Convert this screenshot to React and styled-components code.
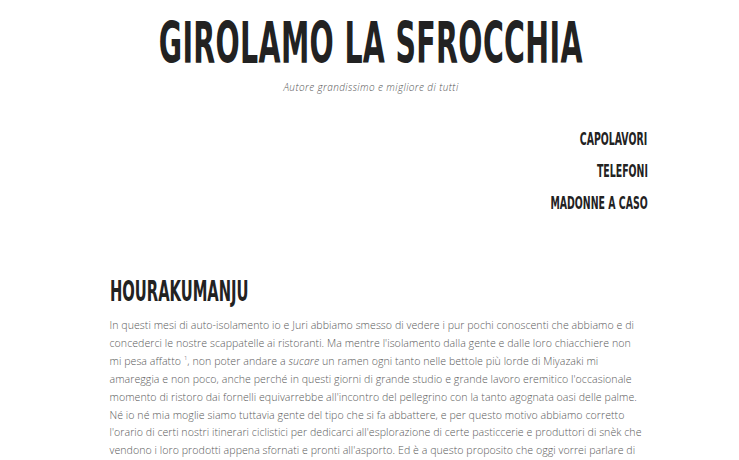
import styled, { createGlobalStyle } from "styled-components";

const GlobalStyle = createGlobalStyle`
  html, body {
    margin: 0;
    padding: 0;
    background: #ffffff;
  }
  body {
    font-family: "Open Sans", "Liberation Sans", sans-serif;
  }
`;

// no Bebas here: a condensed sans, squeezed sideways
const display = `"DejaVu Sans Condensed", "DejaVu Sans", "Liberation Sans", sans-serif`;

const Page = styled.div`
  width: 739px;
  height: 460px;
  overflow: hidden;
`;

const Header = styled.header`
  display: flex;
  flex-direction: column;
  align-items: center;
  padding-top: 14px;
  padding-left: 3px;
`;

const Title = styled.h1`
  margin: 0;
  font-family: ${display};
  font-weight: 700;
  font-size: 55px;
  line-height: 60px;
  color: #222222;
  letter-spacing: 0.6px;
  transform: scale(0.575, 1.02);
  white-space: nowrap;
`;

const Tagline = styled.p`
  margin: 6px 0 0;
  font-style: italic;
  font-weight: 300;
  font-size: 10px;
  color: #555555;
  letter-spacing: 0.4px;
`;

const Container = styled.div`
  max-width: 560px;
  margin: 0 auto;
  padding: 0 0 0 20px;
  box-sizing: border-box;
`;

const Nav = styled.nav`
  display: flex;
  flex-direction: column;
  align-items: flex-end;
  gap: 13px;
  margin-top: 35px;
  padding-right: 2px;
`;

const NavLink = styled.a`
  font-family: ${display};
  font-weight: 700;
  font-size: 18px;
  line-height: 19px;
  color: #222222;
  text-decoration: none;
  transform: scale(0.58, 1);
  transform-origin: right center;
  white-space: nowrap;
`;

const Article = styled.article`
  margin-top: 64px;
`;

const Heading = styled.h2`
  margin: 0;
  font-family: ${display};
  font-weight: 700;
  font-size: 29px;
  line-height: 30px;
  color: #222222;
  transform: scale(0.565, 1);
  transform-origin: left center;
  white-space: nowrap;
`;

const Paragraph = styled.p`
  margin: 11px 0 0;
  font-weight: 300;
  font-size: 10.6px;
  line-height: 17.9px;
  color: #5a5a5a;
  letter-spacing: 0.05px;
`;

const Note = styled.sup`
  font-size: 6px;
  line-height: 0;
`;

export default function App() {
  return (
    <Page>
      <GlobalStyle />
      <Header>
        <Title>GIROLAMO LA SFROCCHIA</Title>
        <Tagline>Autore grandissimo e migliore di tutti</Tagline>
      </Header>
      <Container>
        <Nav>
          <NavLink href="#">CAPOLAVORI</NavLink>
          <NavLink href="#">TELEFONI</NavLink>
          <NavLink href="#">MADONNE A CASO</NavLink>
        </Nav>
        <Article>
          <Heading>HOURAKUMANJU</Heading>
          <Paragraph>
            In questi mesi di auto-isolamento io e Juri abbiamo smesso di vedere i pur pochi
            conoscenti che abbiamo e di<br />
            concederci le nostre scappatelle ai ristoranti. Ma mentre l'isolamento dalla gente e
            dalle loro chiacchiere non<br />
            mi pesa affatto <Note>1</Note>, non poter andare a <em>sucare</em> un ramen ogni tanto
            nelle bettole più lorde di Miyazaki mi<br />
            amareggia e non poco, anche perché in questi giorni di grande studio e grande lavoro
            eremitico l'occasionale<br />
            momento di ristoro dai fornelli equivarrebbe all'incontro del pellegrino con la tanto
            agognata oasi delle palme.<br />
            Né io né mia moglie siamo tuttavia gente del tipo che si fa abbattere, e per questo
            motivo abbiamo corretto<br />
            l'orario di certi nostri itinerari ciclistici per dedicarci all'esplorazione di certe
            pasticcerie e produttori di snèk che<br />
            vendono i loro prodotti appena sfornati e pronti all'asporto. Ed è a questo proposito
            che oggi vorrei parlare di
          </Paragraph>
        </Article>
      </Container>
    </Page>
  );
}
